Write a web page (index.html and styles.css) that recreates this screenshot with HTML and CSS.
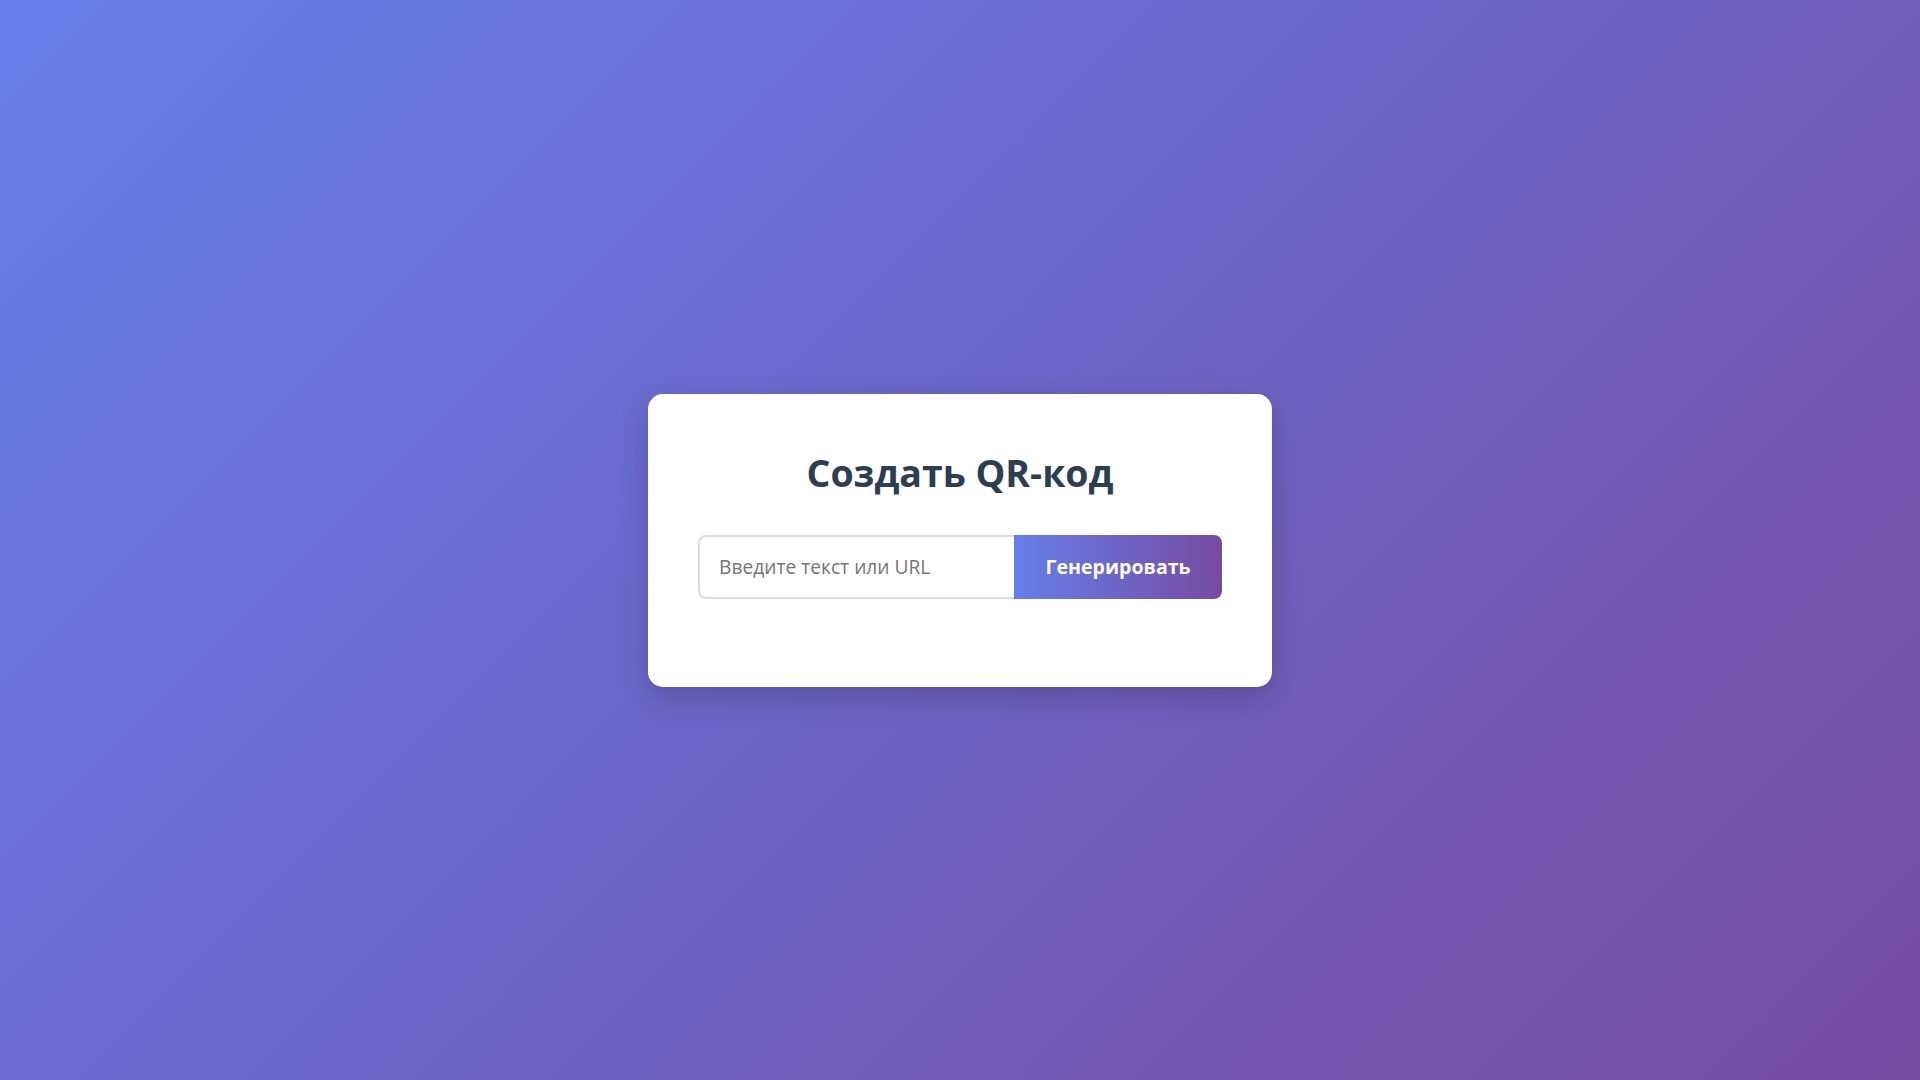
FILE: index.html
```html
<!DOCTYPE html>
<html lang="ru">
<head>
<meta charset="utf-8">
<title>Создать QR-код</title>
<link rel="stylesheet" href="styles.css">
</head>
<body>
<main class="card">
  <h1 class="title">Создать QR-код</h1>
  <form class="form" onsubmit="return false">
    <input class="field" type="text" placeholder="Введите текст или URL">
    <button class="btn" type="submit">Генерировать</button>
  </form>
</main>
</body>
</html>
```
FILE: styles.css
```css
* { box-sizing: border-box; }
html, body { height: 100%; }
body {
  margin: 0;
  font-family: "Open Sans", "Noto Sans", sans-serif;
  background: linear-gradient(135deg, #667eea 0%, #764ba2 100%);
  display: flex;
  align-items: center;
  justify-content: center;
  min-height: 100vh;
}
.card {
  width: 624px;
  background: #fff;
  border-radius: 15px;
  box-shadow: 0 10px 30px rgba(0, 0, 0, 0.2);
  padding: 53px 50px 88px;
}
.title {
  margin: 0 0 37px;
  text-align: center;
  font-size: 37.5px;
  font-weight: 700;
  color: #2c3e50;
  line-height: normal;
}
.form {
  display: flex;
  height: 64px;
}
.field {
  flex: 1;
  min-width: 0;
  height: 64px;
  border: 2px solid #ddd;
  border-right: none;
  border-radius: 8px 0 0 8px;
  padding: 0 19px;
  font-family: inherit;
  font-size: 19.2px;
  color: #333;
  outline: none;
}
.field::placeholder { color: #757575; }
.btn {
  width: 208px;
  height: 64px;
  border: none;
  border-radius: 0 8px 8px 0;
  background: linear-gradient(90deg, #667eea 0%, #764ba2 100%);
  color: #fff;
  font-family: inherit;
  font-size: 19.6px;
  font-weight: 700;
  cursor: pointer;
}
```
